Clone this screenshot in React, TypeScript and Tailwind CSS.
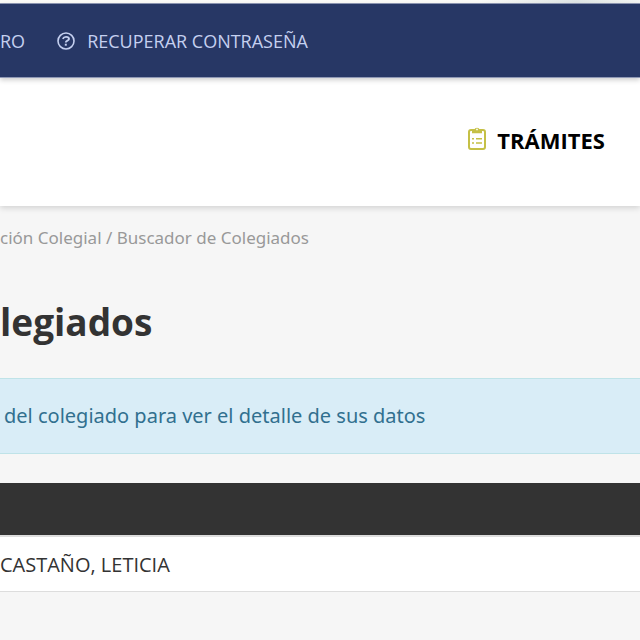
import React from 'react';

const HelpIcon: React.FC = () => (
  <svg className="h-[18px] w-[18px] shrink-0" viewBox="0 0 18 18" fill="none" stroke="currentColor" aria-hidden="true">
    <circle cx="9" cy="9" r="8" strokeWidth="1.6" />
    <path d="M5.8 6.9C6.5 5.4 7.6 4.9 9 4.9c1.8 0 3 .9 3 2.1 0 1.8-3.2 1.5-3.2 3.4" strokeWidth="1.9" />
    <path d="M8.8 11.7v2" strokeWidth="2" />
  </svg>
);

const ClipboardIcon: React.FC = () => (
  <svg className="h-6 w-[18px] shrink-0" viewBox="0 0 18 24" fill="none" stroke="currentColor" aria-hidden="true">
    <rect x="1" y="4" width="16" height="19" rx="2" strokeWidth="2" />
    <path d="M4 7.2V3.8h2.2a2.9 2.9 0 0 1 5.6 0H14v3.4z" fill="currentColor" stroke="none" />
    <circle cx="9" cy="3.4" r="0.9" fill="#fff" stroke="none" />
    <path d="M4 12.8h2M8 12.8h6M4 17h2M8 17h6" strokeWidth="1.4" />
  </svg>
);

const App: React.FC = () => {
  return (
    <div className="min-h-screen overflow-hidden bg-[#f6f6f6] font-['Open_Sans','Noto_Sans',sans-serif] text-[#333]">
      {/* Strip above the top bar */}
      <div className="h-1 border-b border-[#8f98b5] bg-gradient-to-r from-[#fafaf7] from-75% via-[#dfe5e5] via-90% to-[#f3f5f3]" />

      {/* Top bar */}
      <nav className="relative z-20 flex h-[74px] items-center gap-8 border-b border-[#8f98b5] bg-[#273765] text-lg text-[#c5d0f0] shadow-[0_2px_5px_rgba(0,0,0,0.2)]">
        <a href="#registro">RO</a>
        <a href="#recuperar" className="flex items-center gap-3">
          <HelpIcon />
          RECUPERAR CONTRASEÑA
        </a>
      </nav>

      {/* Main header */}
      <header className="relative z-10 flex h-32 items-center justify-end bg-white pr-[35px] pb-1 shadow-[0_2px_6px_rgba(0,0,0,0.15)]">
        <a href="#tramites" className="flex items-center gap-[11px] text-[22px] font-bold text-black">
          <span className="pb-1 text-[#c5c046]">
            <ClipboardIcon />
          </span>
          TRÁMITES
        </a>
      </header>

      <main>
        <nav className="pt-[18px] font-['Noto_Sans',sans-serif] text-[17px] leading-7 text-[#999]">
          <a href="#colegial">ción Colegial</a> / <span>Buscador de Colegiados</span>
        </nav>

        <h1 className="mt-11 text-[37px] leading-[52px] font-bold">legiados</h1>

        <div className="mt-[30px] border-y border-[#bfe3e8] bg-[#d9edf7] py-[21px] pl-1 font-['Noto_Sans',sans-serif] text-xl leading-8 text-[#31708f]">
          del colegiado para ver el detalle de sus datos
        </div>

        <table className="mt-[29px] w-full border-collapse text-left text-xl">
          <thead>
            <tr className="h-[53px] bg-[#333]">
              <th scope="col" aria-label="Nombre" />
            </tr>
          </thead>
          <tbody>
            <tr className="h-[55px] border-t-2 border-b border-[#ddd] bg-white">
              <td className="pt-0.5">CASTAÑO, LETICIA</td>
            </tr>
          </tbody>
        </table>
      </main>
    </div>
  );
};

export default App;
